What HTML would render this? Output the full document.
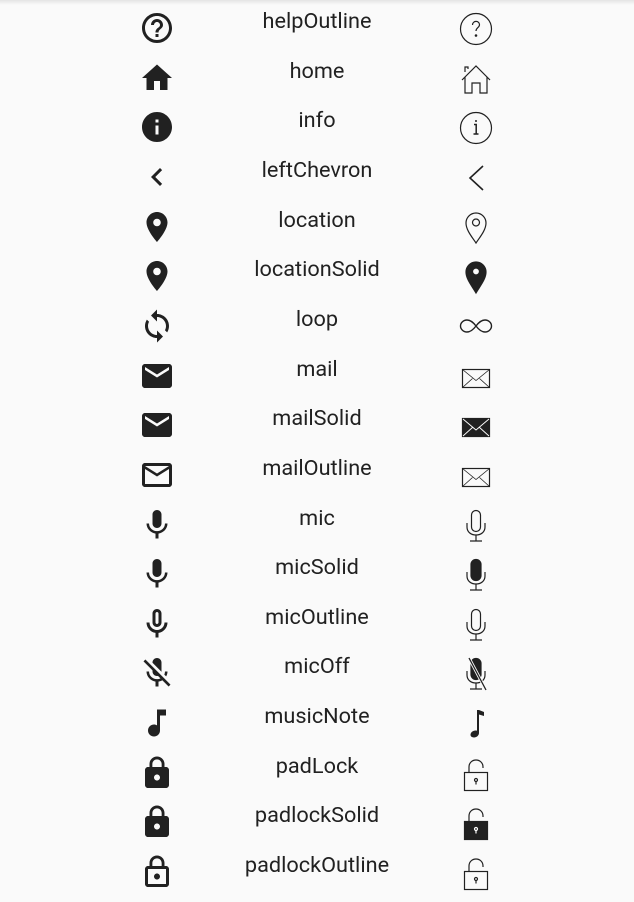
<!DOCTYPE html>
<html><head><meta charset="utf-8"><style>
html,body{margin:0;padding:0;}
body{width:634px;height:902px;background:#fafafa;position:relative;overflow:hidden;font-family:"Roboto","Liberation Sans",sans-serif;color:#212121;}
.sh{position:absolute;left:0;top:0;width:634px;height:5px;background:linear-gradient(#e4e4e4,#fafafa);}
.r{position:absolute;left:0;width:634px;height:50px;}
.t{position:absolute;left:0;width:634px;top:8px;text-align:center;font-size:21.7px;line-height:27px;}
.l{position:absolute;left:139px;top:10px;width:36px;height:36px;fill:#212121;}
.g{position:absolute;left:458px;top:11px;width:36px;height:36px;fill:none;stroke:#212121;stroke-width:1.2;}
</style></head><body>
<div class="sh"></div>

<div class="r" style="top:0px"><div class="t">helpOutline</div>
<svg class="l" viewBox="0 0 24 24"><path d="M11 18h2v-2h-2v2zm1-16C6.48 2 2 6.480 2 12s4.48 10 10 10 10-4.48 10-10S17.52 2 12 2zm0 18c-4.41 0-8-3.59-8-8s3.59-8 8-8 8 3.59 8 8-3.59 8-8 8zm0-14c-2.21 0-4 1.790-4 4h2c0-1.1.9-2 2-2s2 .9 2 2c0 2-3 1.75-3 5h2c0-2.25 3-2.5 3-5 0-2.21-1.79-4-4-4z"/></svg>
<svg class="g" viewBox="0 0 36 36"><circle cx="18" cy="18" r="15.5"/><path d="M14.5 14c0-2.2 1.6-3.6 3.5-3.6s3.5 1.3 3.5 3.3c0 2.8-3.5 3-3.5 6.3"/><circle cx="18" cy="24.5" r="0.7" fill="#212121"/></svg></div>

<div class="r" style="top:49.65px"><div class="t">home</div>
<svg class="l" viewBox="0 0 24 24"><path d="M10 20v-6h4v6h5v-8h3L12 3 2 12h3v8z"/></svg>
<svg class="g" viewBox="0 0 36 36"><path d="M4 19L18 5l14 14M7 16v16h7V22h8v10h7V16M7 11V6h3v2"/></svg></div>

<div class="r" style="top:99.3px"><div class="t">info</div>
<svg class="l" viewBox="0 0 24 24"><path d="M12 2C6.48 2 2 6.48 2 12s4.48 10 10 10 10-4.48 10-10S17.52 2 12 2zm1 15h-2v-6h2v6zm0-8h-2V7h2v2z"/></svg>
<svg class="g" viewBox="0 0 36 36"><circle cx="18" cy="18" r="15.5"/><path d="M16 14.5h2.2V24M15.5 24h5" stroke-width="1.5"/><circle cx="18" cy="11" r="1" fill="#212121" stroke="none"/></svg></div>

<div class="r" style="top:148.95px"><div class="t">leftChevron</div>
<svg class="l" viewBox="0 0 24 24"><path d="M15.41 7.41L14 6l-6 6 6 6 1.41-1.41L10.83 12z"/></svg>
<svg class="g" viewBox="0 0 36 36"><path d="M25 6L12 18l13 12" stroke-width="1.6"/></svg></div>

<div class="r" style="top:198.6px"><div class="t">location</div>
<svg class="l" viewBox="0 0 24 24"><path d="M12 2C8.13 2 5 5.13 5 9c0 5.25 7 13 7 13s7-7.75 7-13c0-3.87-3.130-7-7-7zm0 9.5c-1.38 0-2.5-1.12-2.5-2.5s1.12-2.5 2.5-2.5 2.5 1.12 2.5 2.5-1.12 2.5-2.5 2.5z"/></svg>
<svg class="g" viewBox="0 0 36 36"><path d="M18 33C14 27 8 20 8 13c0-5.5 4.5-10 10-10s10 4.5 10 10c0 7-6 14-10 20z"/><circle cx="18" cy="12.5" r="3.5"/></svg></div>

<div class="r" style="top:248.25px"><div class="t">locationSolid</div>
<svg class="l" viewBox="0 0 24 24"><path d="M12 2C8.13 2 5 5.13 5 9c0 5.25 7 13 7 13s7-7.75 7-13c0-3.87-3.13-7-7-7zm0 9.5c-1.38 0-2.5-1.12-2.5-2.5s1.12-2.5 2.5-2.5 2.5 1.12 2.5 2.5-1.12 2.5-2.5 2.5z"/></svg>
<svg class="g" viewBox="0 0 36 36"><path fill="#212121" d="M18 34C14 27 8 20 8 13c0-5.5 4.5-10 10-10s10 4.5 10 10c0 7-6 14-10 21zm0-18a3.5 3.5 0 1 0 0-7 3.5 3.5 0 1 0 0 7z"/></svg></div>

<div class="r" style="top:297.9px"><div class="t">loop</div>
<svg class="l" viewBox="0 0 24 24"><path d="M12 4V1L8 5l4 4V6c3.31 0 6 2.69 6 6 0 1.01-.25 1.97-.7 2.8l1.46 1.46C19.54 15.03 20 13.57 20 12c0-4.42-3.58-8-8-8zm0 14c-3.31 0-6-2.69-6-6 0-1.01.25-1.97.7-2.8L5.24 7.74C4.46 8.97 4 10.43 4 12c0 4.42 3.58 8 8 8v3l4-4-4-4v3z"/></svg>
<svg class="g" viewBox="0 0 36 36"><path d="M18 17c-3-4-6-6-9-6-3.5 0-6.5 2.7-6.5 6s3 6 6.5 6c3 0 6-2 9-6s6-6 9-6c3.5 0 6.5 2.7 6.5 6s-3 6-6.5 6c-3 0-6-2-9-6z" stroke-width="1.4"/></svg></div>

<div class="r" style="top:347.55px"><div class="t">mail</div>
<svg class="l" viewBox="0 0 24 24"><path d="M20 4H4c-1.1 0-1.99.9-1.99 2L2 18c0 1.1.9 2 2 2h16c1.1 0 2-.9 2-2V6c0-1.1-.9-2-2-2zm0 4l-8 5-8-5V6l8 5 8-5v2z"/></svg>
<svg class="g" viewBox="0 0 36 36"><rect x="4.5" y="10.5" width="27" height="18"/><path d="M4.5 10.5l13.5 11 13.5-11M4.5 28.5l10-9M31.5 28.5l-10-9" stroke-width="0.8"/></svg></div>

<div class="r" style="top:397.2px"><div class="t">mailSolid</div>
<svg class="l" viewBox="0 0 24 24"><path d="M20 4H4c-1.1 0-1.99.9-1.99 2L2 18c0 1.1.9 2 2 2h16c1.1 0 2-.9 2-2V6c0-1.1-.9-2-2-2zm0 4l-8 5-8-5V6l8 5 8-5v2z"/></svg>
<svg class="g" viewBox="0 0 36 36"><rect x="4.5" y="10.5" width="27" height="18" fill="#212121"/><path d="M5 11l13 11 13-11M5 28l10-9M31 28l-10-9" stroke="#fff" stroke-width="0.9"/></svg></div>

<div class="r" style="top:446.85px"><div class="t">mailOutline</div>
<svg class="l" viewBox="0 0 24 24"><path d="M20 4H4c-1.1 0-1.99.9-1.99 2L2 18c0 1.1.9 2 2 2h16c1.1 0 2-.9 2-2V6c0-1.1-.9-2-2-2zm0 14H4V8l8 5 8-5v10zm-8-7L4 6h16l-8 5z"/></svg>
<svg class="g" viewBox="0 0 36 36"><rect x="4.5" y="10.5" width="27" height="18"/><path d="M4.5 10.5l13.5 11 13.5-11M4.5 28.5l10-9M31.5 28.5l-10-9" stroke-width="0.8"/></svg></div>

<div class="r" style="top:496.5px"><div class="t">mic</div>
<svg class="l" viewBox="0 0 24 24"><path d="M12 14c1.66 0 2.99-1.34 2.99-3L15 5c0-1.66-1.34-3-3-3S9 3.34 9 5v6c0 1.66 1.34 3 3 3zm5.3-3c0 3-2.54 5.1-5.3 5.1S6.7 14 6.7 11H5c0 3.41 2.72 6.23 6 6.72V21h2v-3.28c3.28-.48 6-3.3 6-6.72h-1.7z"/></svg>
<svg class="g" viewBox="0 0 36 36"><rect x="13.5" y="2.5" width="9" height="21" rx="4.5"/><path d="M9 15v4c0 5 4 8 9 8s9-3 9-8v-4M18 27v6M12 33h12"/></svg></div>

<div class="r" style="top:546.15px"><div class="t">micSolid</div>
<svg class="l" viewBox="0 0 24 24"><path d="M12 14c1.66 0 2.99-1.34 2.99-3L15 5c0-1.66-1.34-3-3-3S9 3.34 9 5v6c0 1.66 1.34 3 3 3zm5.3-3c0 3-2.54 5.1-5.3 5.1S6.7 14 6.7 11H5c0 3.41 2.72 6.23 6 6.72V21h2v-3.28c3.28-.48 6-3.3 6-6.72h-1.7z"/></svg>
<svg class="g" viewBox="0 0 36 36"><rect x="13" y="2.5" width="10" height="21" rx="5" fill="#212121"/><path d="M9 15v4c0 5 4 8 9 8s9-3 9-8v-4M18 27v6M12 33h12"/></svg></div>

<div class="r" style="top:595.8px"><div class="t">micOutline</div>
<svg class="l" viewBox="0 0 24 24"><path d="M12 14c1.66 0 3-1.34 3-3V5c0-1.66-1.34-3-3-3S9 3.34 9 5v6c0 1.66 1.34 3 3 3zm-1-9c0-.55.45-1 1-1s1 .45 1 1v6c0 .55-.45 1-1 1s-1-.45-1-1V5zm6 6c0 2.76-2.24 5-5 5s-5-2.24-5-5H5c0 3.53 2.61 6.43 6 6.92V21h2v-3.08c3.39-.49 6-3.39 6-6.92h-2z"/></svg>
<svg class="g" viewBox="0 0 36 36"><rect x="13.5" y="2.5" width="9" height="21" rx="4.5"/><path d="M9 15v4c0 5 4 8 9 8s9-3 9-8v-4M18 27v6M12 33h12"/></svg></div>

<div class="r" style="top:645.45px"><div class="t">micOff</div>
<svg class="l" viewBox="0 0 24 24"><path d="M19 11h-1.7c0 .74-.16 1.43-.43 2.05l1.23 1.230c.56-.98.9-2.09.9-3.28zm-4.02.17c0-.06.02-.11.02-.17V5c0-1.66-1.34-3-3-3S9 3.34 9 5v.18l5.98 5.99zM4.27 3L3 4.27l6.01 6.01V11c0 1.66 1.33 3 2.99 3 .22 0 .44-.03.65-.08l1.66 1.66c-.71.33-1.5.52-2.31.52-2.76 0-5.3-2.1-5.3-5.1H5c0 3.41 2.72 6.23 6 6.72V21h2v-3.28c.91-.13 1.770-.45 2.54-.9L19.730 21 21 19.73 4.27 3z"/></svg>
<svg class="g" viewBox="0 0 36 36"><rect x="13" y="2.5" width="10" height="21" rx="5" fill="#212121"/><path d="M9 15v4c0 5 4 8 9 8s9-3 9-8v-4M18 27v6M12 33h12"/><path d="M11 2l17 32" stroke="#fafafa" stroke-width="3"/><path d="M11 2l17 32" stroke-width="1.3"/></svg></div>

<div class="r" style="top:695.1px"><div class="t">musicNote</div>
<svg class="l" viewBox="0 0 24 24"><path d="M12 3v10.55c-.59-.34-1.27-.55-2-.55-2.21 0-4 1.79-4 4s1.79 4 4 4 4-1.79 4-4V7h4V3h-6z"/></svg>
<svg class="g" viewBox="0 0 36 36"><path fill="#212121" stroke="none" d="M19 4h2l5 2v4l-5-1.5V27c0 2.5-2.5 4.5-5 4.5-2 0-3.5-1-3.5-2.7 0-2.3 2.5-4.3 5-4.3.6 0 1 .1 1.5.2z"/></svg></div>

<div class="r" style="top:744.75px"><div class="t">padLock</div>
<svg class="l" viewBox="0 0 24 24"><path d="M18 8h-1V6c0-2.76-2.24-5-5-5S7 3.24 7 6v2H6c-1.1 0-2 .9-2 2v10c0 1.1.9 2 2 2h12c1.1 0 2-.9 2-2V10c0-1.1-.9-2-2-2zm-6 9c-1.1 0-2-.9-2-2s.9-2 2-2 2 .9 2 2-.9 2-2 2zm3.1-9H8.9V6c0-1.71 1.39-3.1 3.1-3.1 1.71 0 3.1 1.39 3.1 3.1v2z"/></svg>
<svg class="g" viewBox="0 0 36 36"><rect x="6.5" y="16.5" width="23" height="18"/><path d="M11 16.5V11c0-4 3-7 7-7s7 3 7 7v1"/><circle cx="18" cy="24" r="1.5"/><path d="M18 25.5v3"/></svg></div>

<div class="r" style="top:794.4px"><div class="t">padlockSolid</div>
<svg class="l" viewBox="0 0 24 24"><path d="M18 8h-1V6c0-2.76-2.24-5-5-5S7 3.24 7 6v2H6c-1.1 0-2 .9-2 2v10c0 1.1.9 2 2 2h12c1.1 0 2-.9 2-2V10c0-1.1-.9-2-2-2zm-6 9c-1.1 0-2-.9-2-2s.9-2 2-2 2 .9 2 2-.9 2-2 2zm3.1-9H8.9V6c0-1.71 1.39-3.1 3.1-3.1 1.71 0 3.1 1.39 3.1 3.1v2z"/></svg>
<svg class="g" viewBox="0 0 36 36"><rect x="6.5" y="16.5" width="23" height="18" fill="#212121"/><path d="M11 16.5V11c0-4 3-7 7-7s7 3 7 7v1"/><circle cx="18" cy="24" r="1.5" stroke="#fff"/><path d="M18 25.5v3" stroke="#fff"/></svg></div>

<div class="r" style="top:844.05px"><div class="t">padlockOutline</div>
<svg class="l" viewBox="0 0 24 24"><path d="M12 17c1.1 0 2-.9 2-2s-.9-2-2-2-2 .9-2 2 .9 2 2 2zm6-9h-1V6c0-2.76-2.24-5-5-5S7 3.24 7 6v2H6c-1.1 0-2 .9-2 2v10c0 1.1.9 2 2 2h12c1.1 0 2-.9 2-2V10c0-1.1-.9-2-2-2zM8.9 6c0-1.710 1.39-3.1 3.1-3.1s3.1 1.39 3.1 3.1v2H8.9V6zM18 20H6V10h12v10z"/></svg>
<svg class="g" viewBox="0 0 36 36"><rect x="6.5" y="16.5" width="23" height="18"/><path d="M11 16.5V11c0-4 3-7 7-7s7 3 7 7v1"/><circle cx="18" cy="24" r="1.5"/><path d="M18 25.5v3"/></svg></div>

</body></html>
